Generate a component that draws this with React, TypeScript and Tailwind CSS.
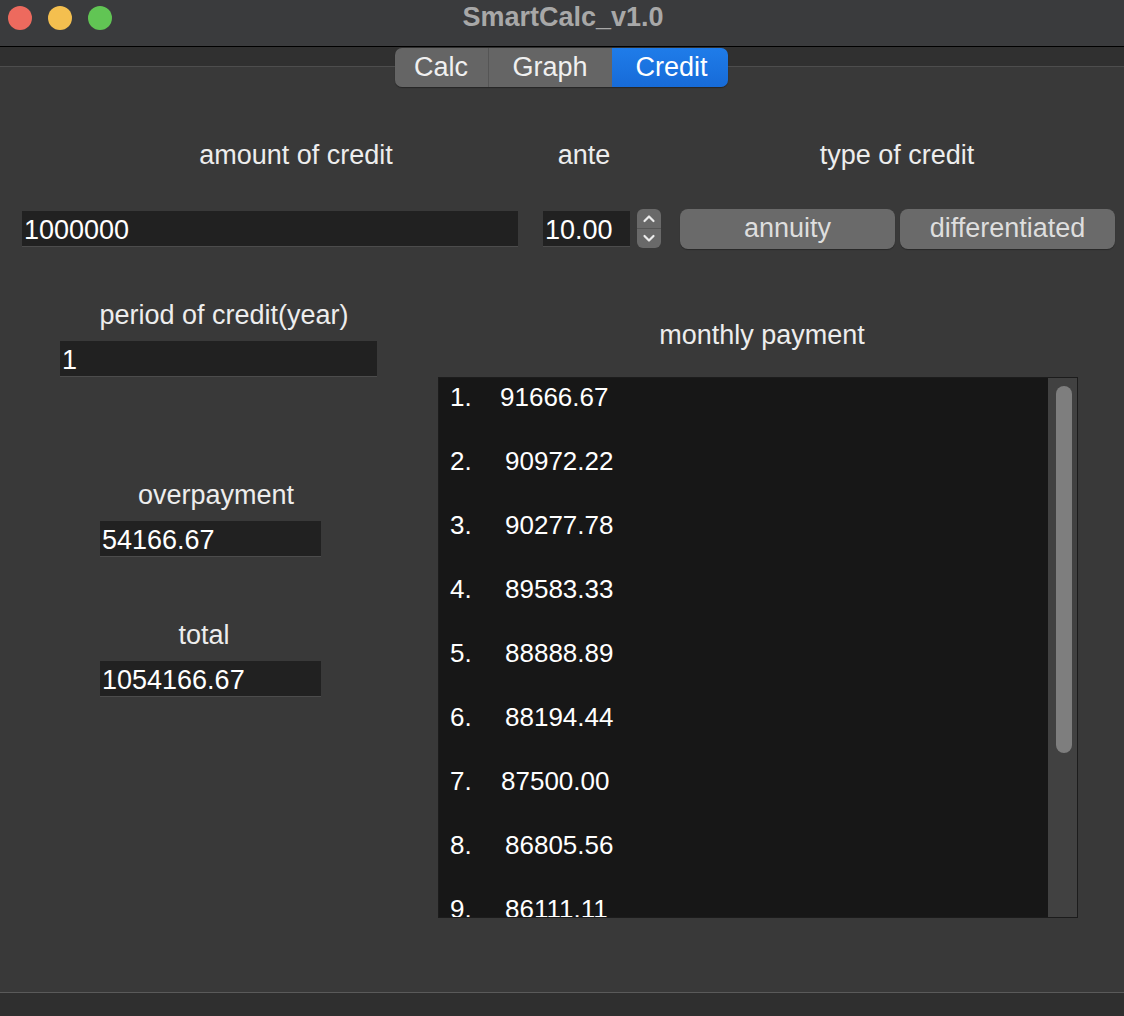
const PAYMENTS = [
  { n: "1.", v: "91666.67", pad: "pl-[34px]" },
  { n: "2.", v: "90972.22", pad: "pl-[39px]" },
  { n: "3.", v: "90277.78", pad: "pl-[39px]" },
  { n: "4.", v: "89583.33", pad: "pl-[39px]" },
  { n: "5.", v: "88888.89", pad: "pl-[39px]" },
  { n: "6.", v: "88194.44", pad: "pl-[39px]" },
  { n: "7.", v: "87500.00", pad: "pl-[35px]" },
  { n: "8.", v: "86805.56", pad: "pl-[39px]" },
  { n: "9.", v: "86111.11", pad: "pl-[39px]" },
];

function Field({ value, className }: { value: string; className: string }) {
  return (
    <div
      className={`h-[36px] bg-[#212121] border-b border-[#4c4c4c] pl-[2px] pt-[4px] flex items-center text-[27px] text-white leading-none ${className}`}
    >
      {value}
    </div>
  );
}

function Label({ text, className }: { text: string; className: string }) {
  return (
    <div className={`text-[27px] leading-[32px] text-[#ededed] text-center whitespace-nowrap ${className}`}>
      {text}
    </div>
  );
}

export default function App() {
  return (
    <div className="w-[1124px] h-[1016px] flex flex-col bg-[#393939] font-['Liberation_Sans',Arial,sans-serif] overflow-hidden">
      {/* title bar */}
      <div className="h-[47px] shrink-0 bg-[#3a3b3d] border-b border-black relative">
        <div className="flex items-center gap-[16px] pl-[8px] pt-[6px]">
          <span className="w-[24px] h-[24px] rounded-full bg-[#ed6a5e]" />
          <span className="w-[24px] h-[24px] rounded-full bg-[#f4bf4f]" />
          <span className="w-[24px] h-[24px] rounded-full bg-[#61c554]" />
        </div>
        <div className="absolute inset-x-0 top-0 h-[35px] flex items-center justify-center pl-[2px] text-[27px] font-bold text-[#a8a8a8]">
          SmartCalc_v1.0
        </div>
      </div>

      {/* tabs */}
      <div className="h-[40px] shrink-0 flex justify-center bg-[linear-gradient(to_bottom,#303030_0,#303030_19px,#4d4d4d_19px,#4d4d4d_20px,#393939_20px)]">
        <div className="flex h-[39px] mt-[1px] ml-[-2px] rounded-[7px] overflow-hidden text-[27px] leading-none shadow-[0_1px_1px_rgba(0,0,0,0.35)]">
          <div className="w-[94px] bg-[#656565] text-[#f0f0f0] flex items-center justify-center border-r border-[#555555]">
            Calc
          </div>
          <div className="w-[123px] bg-[#656565] text-[#f0f0f0] flex items-center justify-center">Graph</div>
          <div className="w-[116px] bg-[linear-gradient(to_bottom,#1f7ce9,#176bd8)] text-white flex items-center justify-center pl-[4px]">
            Credit
          </div>
        </div>
      </div>

      {/* content */}
      <div className="flex-1 flex flex-col">
        <div className="flex mt-[52px]">
          <Label text="amount of credit" className="ml-[196px] w-[200px]" />
          <Label text="ante" className="ml-[138px] w-[100px]" />
          <Label text="type of credit" className="ml-[163px] w-[200px]" />
        </div>

        <div className="flex items-center mt-[37px] h-[41px]">
          <Field value="1000000" className="ml-[22px] w-[496px]" />
          <Field value="10.00" className="ml-[25px] w-[87px] h-[35px]" />
          <div className="ml-[7px] w-[24px] h-[39px] rounded-[6px] bg-[#696969] flex flex-col overflow-hidden">
            <div className="flex-1 flex items-center justify-center border-b border-[#555555]">
              <svg width="14" height="9" viewBox="0 0 14 9" fill="none">
                <path d="M2.5 7 L7 2.5 L11.5 7" stroke="#ececec" strokeWidth="2.2" strokeLinecap="round" strokeLinejoin="round" />
              </svg>
            </div>
            <div className="flex-1 flex items-center justify-center">
              <svg width="14" height="9" viewBox="0 0 14 9" fill="none">
                <path d="M2.5 2 L7 6.5 L11.5 2" stroke="#ececec" strokeWidth="2.2" strokeLinecap="round" strokeLinejoin="round" />
              </svg>
            </div>
          </div>
          <button className="ml-[19px] w-[215px] h-[40px] rounded-[8px] bg-[#6a6a6a] text-[#dedede] text-[27px] leading-none shadow-[0_1px_1px_rgba(0,0,0,0.3)]">
            annuity
          </button>
          <button className="ml-[5px] w-[215px] h-[40px] rounded-[8px] bg-[#6a6a6a] text-[#dedede] text-[27px] leading-none shadow-[0_1px_1px_rgba(0,0,0,0.3)]">
            differentiated
          </button>
        </div>

        <div className="flex">
          {/* left column */}
          <div className="w-[438px] flex flex-col">
            <Label text="period of credit(year)" className="mt-[50px] ml-[94px] w-[260px]" />
            <Field value="1" className="mt-[10px] ml-[60px] w-[317px]" />
            <Label text="overpayment" className="mt-[102px] ml-[116px] w-[200px]" />
            <Field value="54166.67" className="mt-[10px] ml-[100px] w-[221px]" />
            <Label text="total" className="mt-[62px] ml-[154px] w-[100px]" />
            <Field value="1054166.67" className="mt-[10px] ml-[100px] w-[221px]" />
          </div>

          {/* right column */}
          <div className="flex flex-col">
            <Label text="monthly payment" className="mt-[70px] ml-[212px] w-[224px]" />
            <div className="mt-[26px] w-[640px] h-[541px] border border-[#1c1c1c] bg-[#171717] flex overflow-hidden">
              <div className="flex-1 flex flex-col gap-[32px] pt-[3px] pl-[11px] overflow-hidden">
                {PAYMENTS.map((p) => (
                  <div key={p.n} className="flex h-[32px] shrink-0 items-center text-[26px] leading-none text-white">
                    <span className="w-[16px]">{p.n}</span>
                    <span className={p.pad}>{p.v}</span>
                  </div>
                ))}
              </div>
              <div className="w-[29px] bg-[#414141] pt-[8px] pl-[8px]">
                <div className="w-[16px] h-[367px] rounded-full bg-[#7e7e7e]" />
              </div>
            </div>
          </div>
        </div>
      </div>

      {/* status bar */}
      <div className="h-[24px] shrink-0 bg-[#2f2f2f] border-t border-[#5a5a5a]" />
    </div>
  );
}
